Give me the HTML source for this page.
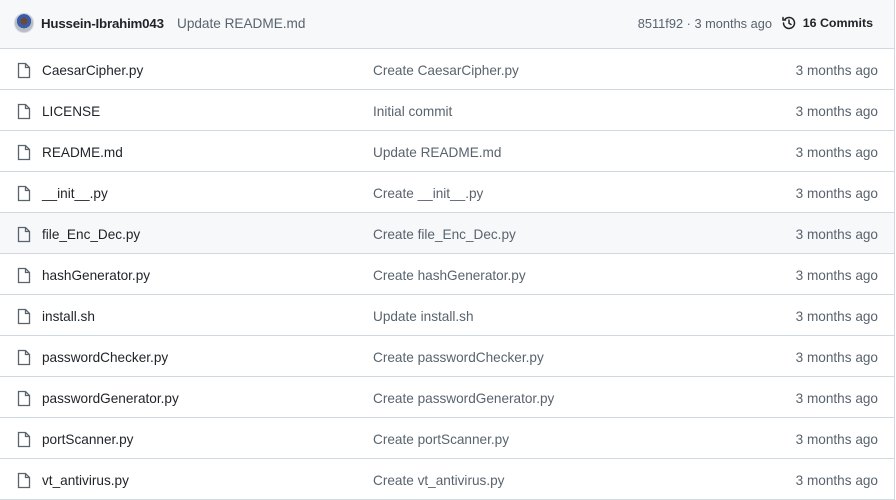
<!DOCTYPE html>
<html><head><style>
body{margin:0;background:#fff;font-family:"Liberation Sans",Arial,sans-serif;font-size:13.6px;color:#1f2328;}
.box{position:absolute;left:-1px;top:-1px;width:894px;border:1px solid #d1d9e0;border-top:none;}
.hd{height:49px;background:#f6f8fa;border-bottom:1px solid #d1d9e0;position:relative;}
.av{position:absolute;left:14px;top:14px;width:20px;height:20px;border-radius:50%;background:radial-gradient(circle at 50% 40%,#6b4a3a 0 25%,#3b5ca8 26% 50%,#b8bcc4 51%);border:1px solid #d1d9e0;box-sizing:border-box;}
.u{position:absolute;left:41px;top:17px;font-weight:bold;font-size:13.3px;letter-spacing:-0.2px}
.m{position:absolute;left:177px;top:17px;color:#59636e;}
.sha{position:absolute;right:122px;top:17px;color:#59636e;font-size:12.8px;}
.cm{position:absolute;right:21px;top:17px;font-weight:bold;font-size:12.4px;}
.cm svg{position:absolute;left:-22px;top:-1px;}
.r{height:40px;border-bottom:1px solid #d1d9e0;position:relative;}
.r:last-child{border-bottom:none}
.r.h{background:#f6f8fa}
.r svg{position:absolute;left:17px;top:13px;}
.n{position:absolute;left:42px;top:14px;}
.c{position:absolute;left:373px;top:14px;color:#59636e;}
.d{position:absolute;right:16px;top:14px;color:#59636e;}
</style></head><body>
<div class="box">
<div class="hd"><div class="av"></div><span class="u">Hussein-Ibrahim043</span><span class="m">Update README.md</span><span class="sha">8511f92 · 3 months ago</span><span class="cm"><svg width="16" height="16" viewBox="0 0 16 16" fill="none" stroke="#1f2328" stroke-width="1.5" stroke-linecap="round"><path d="M2.5 8a5.5 5.5 0 1 0 1.6-3.9"/><path d="M2 2.5v2.5h2.5"/><path d="M8 5v3.2l2 1.3"/></svg>16 Commits</span></div>
<div class="r"><svg width="14" height="17" viewBox="0 0 14 17" fill="none" stroke="#59636e" stroke-width="1.3"><path d="M1.5 1.5h7l4 4v10h-11z"/><path d="M8.5 1.5v4h4"/></svg><span class="n">CaesarCipher.py</span><span class="c">Create CaesarCipher.py</span><span class="d">3 months ago</span></div>
<div class="r"><svg width="14" height="17" viewBox="0 0 14 17" fill="none" stroke="#59636e" stroke-width="1.3"><path d="M1.5 1.5h7l4 4v10h-11z"/><path d="M8.5 1.5v4h4"/></svg><span class="n">LICENSE</span><span class="c">Initial commit</span><span class="d">3 months ago</span></div>
<div class="r"><svg width="14" height="17" viewBox="0 0 14 17" fill="none" stroke="#59636e" stroke-width="1.3"><path d="M1.5 1.5h7l4 4v10h-11z"/><path d="M8.5 1.5v4h4"/></svg><span class="n">README.md</span><span class="c">Update README.md</span><span class="d">3 months ago</span></div>
<div class="r"><svg width="14" height="17" viewBox="0 0 14 17" fill="none" stroke="#59636e" stroke-width="1.3"><path d="M1.5 1.5h7l4 4v10h-11z"/><path d="M8.5 1.5v4h4"/></svg><span class="n">__init__.py</span><span class="c">Create __init__.py</span><span class="d">3 months ago</span></div>
<div class="r h"><svg width="14" height="17" viewBox="0 0 14 17" fill="none" stroke="#59636e" stroke-width="1.3"><path d="M1.5 1.5h7l4 4v10h-11z"/><path d="M8.5 1.5v4h4"/></svg><span class="n">file_Enc_Dec.py</span><span class="c">Create file_Enc_Dec.py</span><span class="d">3 months ago</span></div>
<div class="r"><svg width="14" height="17" viewBox="0 0 14 17" fill="none" stroke="#59636e" stroke-width="1.3"><path d="M1.5 1.5h7l4 4v10h-11z"/><path d="M8.5 1.5v4h4"/></svg><span class="n">hashGenerator.py</span><span class="c">Create hashGenerator.py</span><span class="d">3 months ago</span></div>
<div class="r"><svg width="14" height="17" viewBox="0 0 14 17" fill="none" stroke="#59636e" stroke-width="1.3"><path d="M1.5 1.5h7l4 4v10h-11z"/><path d="M8.5 1.5v4h4"/></svg><span class="n">install.sh</span><span class="c">Update install.sh</span><span class="d">3 months ago</span></div>
<div class="r"><svg width="14" height="17" viewBox="0 0 14 17" fill="none" stroke="#59636e" stroke-width="1.3"><path d="M1.5 1.5h7l4 4v10h-11z"/><path d="M8.5 1.5v4h4"/></svg><span class="n">passwordChecker.py</span><span class="c">Create passwordChecker.py</span><span class="d">3 months ago</span></div>
<div class="r"><svg width="14" height="17" viewBox="0 0 14 17" fill="none" stroke="#59636e" stroke-width="1.3"><path d="M1.5 1.5h7l4 4v10h-11z"/><path d="M8.5 1.5v4h4"/></svg><span class="n">passwordGenerator.py</span><span class="c">Create passwordGenerator.py</span><span class="d">3 months ago</span></div>
<div class="r"><svg width="14" height="17" viewBox="0 0 14 17" fill="none" stroke="#59636e" stroke-width="1.3"><path d="M1.5 1.5h7l4 4v10h-11z"/><path d="M8.5 1.5v4h4"/></svg><span class="n">portScanner.py</span><span class="c">Create portScanner.py</span><span class="d">3 months ago</span></div>
<div class="r"><svg width="14" height="17" viewBox="0 0 14 17" fill="none" stroke="#59636e" stroke-width="1.3"><path d="M1.5 1.5h7l4 4v10h-11z"/><path d="M8.5 1.5v4h4"/></svg><span class="n">vt_antivirus.py</span><span class="c">Create vt_antivirus.py</span><span class="d">3 months ago</span></div>
</div>
</body></html>
